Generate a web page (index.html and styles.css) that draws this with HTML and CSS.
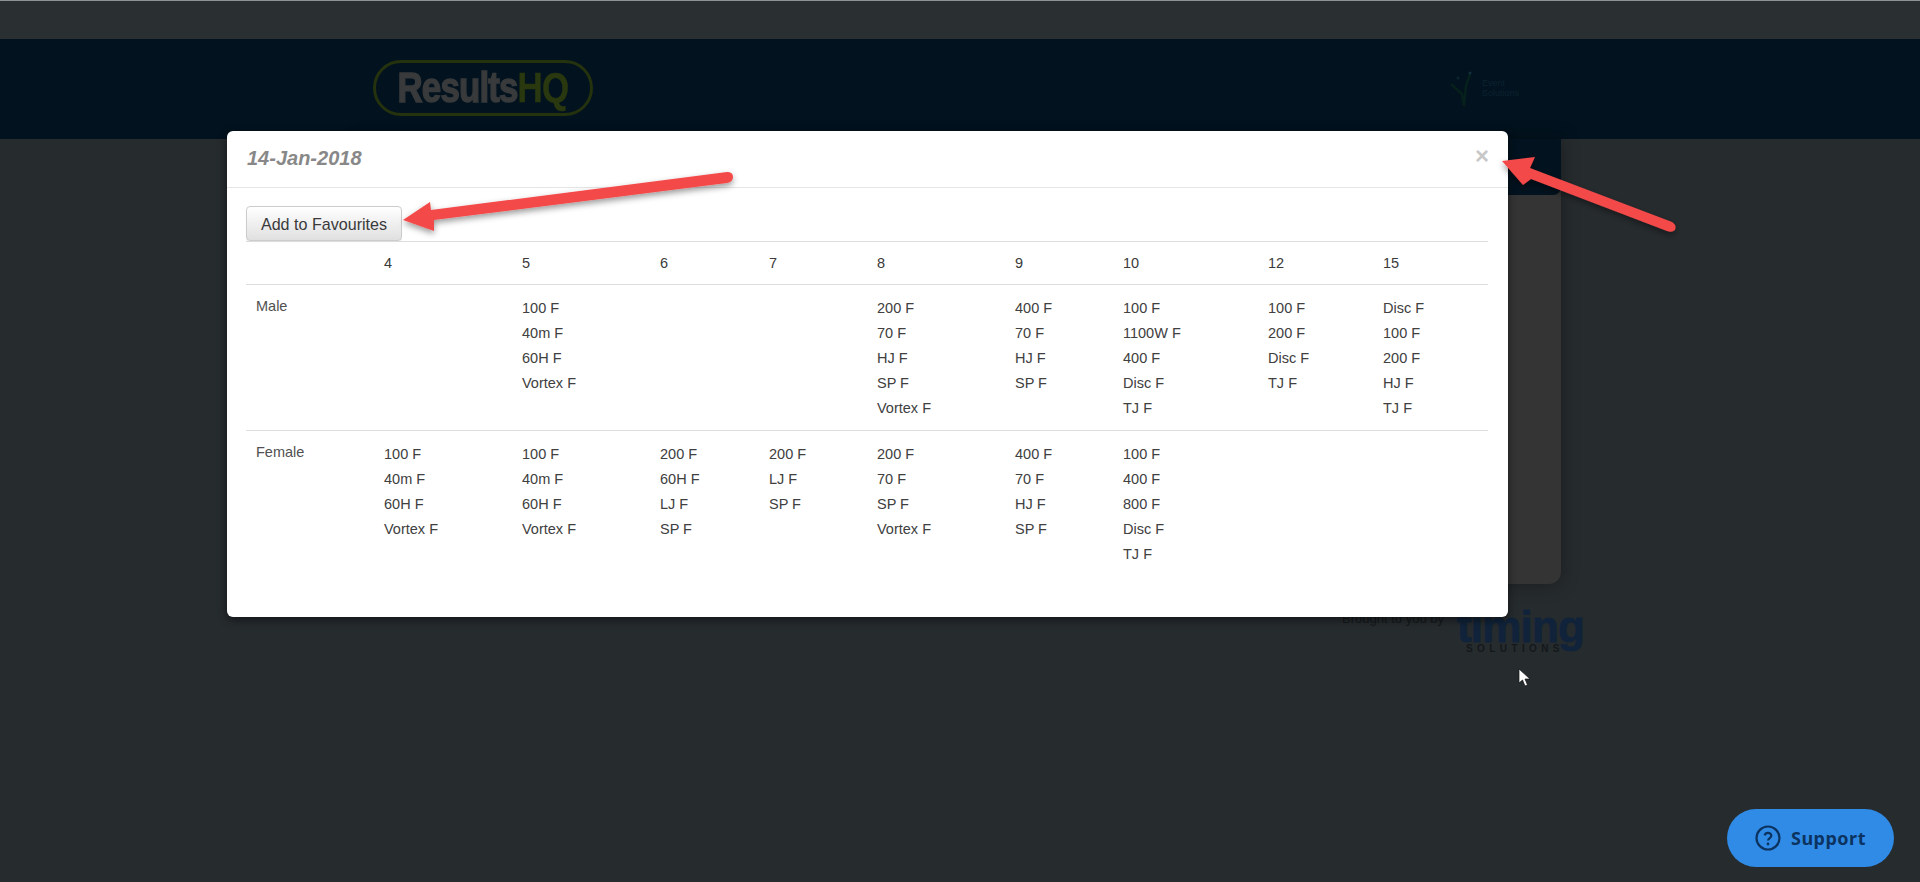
FILE: index.html
```html
<!DOCTYPE html>
<html lang="en">
<head>
<meta charset="utf-8">
<title>ResultsHQ</title>
<link rel="stylesheet" href="styles.css">
</head>
<body>
<div class="page">
  <div class="topbar"></div>
  <header class="navbar">
    <div class="brand"><div class="brand-text"><span class="brand-main">Results</span><span class="brand-hq">HQ</span></div></div>
    <div class="sponsor">
      <svg class="sponsor-mark" width="32" height="40" viewBox="0 0 32 40" aria-hidden="true">
        <path d="M3 16l11 10 2 12M16 38l2-20 4-12" fill="none" stroke="#06201c" stroke-width="2.5"/>
        <circle cx="22" cy="5" r="1.5" fill="#14303e"/>
        <circle cx="10" cy="10" r="1.5" fill="#0a2431"/>
      </svg>
      <div class="sponsor-text">Event<br>Solutions</div>
    </div>
  </header>
  <main class="content">
    <section class="panel">
      <div class="panel-head"></div>
    </section>
    <footer class="credit">
      <span class="credit-label">Brought to you by</span>
      <div class="timing">
        <span class="timing-word">timing</span>
        <span class="timing-sub">SOLUTIONS</span>
      </div>
    </footer>
  </main>
</div>

<div class="modal">
  <div class="modal-header">
    <h4 class="modal-title">14-Jan-2018</h4>
    <span class="close">×</span>
  </div>
  <div class="modal-body">
    <button class="btn" type="button">Add to Favourites</button>
    <table class="events">
      <colgroup>
        <col class="c1"><col class="c2"><col class="c3"><col class="c4"><col class="c5"><col class="c6"><col class="c7"><col class="c8"><col class="c9"><col class="c10">
      </colgroup>
      <thead>
        <tr><th></th><th>4</th><th>5</th><th>6</th><th>7</th><th>8</th><th>9</th><th>10</th><th>12</th><th>15</th></tr>
      </thead>
      <tbody>
        <tr>
          <td class="label">Male</td>
          <td></td>
          <td><div>100 F</div><div>40m F</div><div>60H F</div><div>Vortex F</div></td>
          <td></td>
          <td></td>
          <td><div>200 F</div><div>70 F</div><div>HJ F</div><div>SP F</div><div>Vortex F</div></td>
          <td><div>400 F</div><div>70 F</div><div>HJ F</div><div>SP F</div></td>
          <td><div>100 F</div><div>1100W F</div><div>400 F</div><div>Disc F</div><div>TJ F</div></td>
          <td><div>100 F</div><div>200 F</div><div>Disc F</div><div>TJ F</div></td>
          <td><div>Disc F</div><div>100 F</div><div>200 F</div><div>HJ F</div><div>TJ F</div></td>
        </tr>
        <tr>
          <td class="label">Female</td>
          <td><div>100 F</div><div>40m F</div><div>60H F</div><div>Vortex F</div></td>
          <td><div>100 F</div><div>40m F</div><div>60H F</div><div>Vortex F</div></td>
          <td><div>200 F</div><div>60H F</div><div>LJ F</div><div>SP F</div></td>
          <td><div>200 F</div><div>LJ F</div><div>SP F</div></td>
          <td><div>200 F</div><div>70 F</div><div>SP F</div><div>Vortex F</div></td>
          <td><div>400 F</div><div>70 F</div><div>HJ F</div><div>SP F</div></td>
          <td><div>100 F</div><div>400 F</div><div>800 F</div><div>Disc F</div><div>TJ F</div></td>
          <td></td>
          <td></td>
        </tr>
      </tbody>
    </table>
  </div>
</div>

<svg class="arrows" width="1920" height="882" viewBox="0 0 1920 882" aria-hidden="true">
  <defs>
    <filter id="arrow-shadow" x="-10%" y="-30%" width="120%" height="170%">
      <feDropShadow dx="0" dy="3" stdDeviation="3" flood-color="#000" flood-opacity="0.4"/>
    </filter>
  </defs>
  <g filter="url(#arrow-shadow)" fill="#f44a4a">
    <path d="M403 220L430 202L431 210L727 172Q733 172 733 177Q733 182 727 183L434 220L434 231Z"/>
    <path d="M1502 161L1535 157L1530 168L1672 222Q1677 225 1675 230Q1672 233 1667 231L1531 179L1523 185Z"/>
  </g>
</svg>

<svg class="cursor" width="13" height="19" viewBox="0 0 13 19" aria-hidden="true">
  <path d="M1 1V15L4.5 12L7 18L9.5 17L7 11H12Z" fill="#fff" stroke="#111" stroke-width="0.7"/>
</svg>

<button class="support" type="button">
  <svg width="26" height="26" viewBox="0 0 26 26" aria-hidden="true">
    <circle cx="13" cy="13" r="11.5" fill="none" stroke="#0c335f" stroke-width="2.2"/>
    <path d="M9.6 10.4A3.5 3.5 0 0 1 16.4 10.6C16.4 13 13 13.2 13 15.6" fill="none" stroke="#0c335f" stroke-width="2.2"/>
    <circle cx="13" cy="19" r="1.4" fill="#0c335f"/>
  </svg>
  <span>Support</span>
</button>
</body>
</html>
```

FILE: styles.css
```css
* { box-sizing: border-box; }

html, body {
  margin: 0;
  height: 882px;
  overflow: hidden;
  background: #262b2e;
  font-family: "Liberation Sans", Arial, sans-serif;
}

.page {
  display: flex;
  flex-direction: column;
  height: 882px;
}

.topbar {
  height: 39px;
  flex: none;
  background: #2a2f32;
  border-top: 1px solid #8f9396;
}

.navbar {
  height: 100px;
  flex: none;
  background: #02121e;
  display: flex;
  align-items: flex-start;
  padding: 21px 0 0 373px;
}

.brand {
  width: 220px;
  height: 56px;
  border: 3px solid #24320e;
  border-radius: 28px;
  display: flex;
  align-items: center;
  justify-content: center;
  font-weight: 700;
  font-size: 42px;
  line-height: 50px;
}

.brand-text {
  flex: none;
  white-space: nowrap;
  letter-spacing: -1px;
  transform: scaleX(0.83);
  transform-origin: center;
}

.brand-main { color: #383a3b; -webkit-text-stroke: 1.5px #383a3b; }
.brand-hq { color: #2a380f; -webkit-text-stroke: 0.5px #2a380f; }

.sponsor {
  margin: 8px 0 0 855px;
  display: flex;
  align-items: center;
  gap: 2px;
  height: 40px;
}

.sponsor-text {
  font-size: 9px;
  line-height: 10px;
  color: #0a2230;
  width: 40px;
}

.content {
  flex: 1;
  display: flex;
  flex-direction: column;
  align-items: flex-end;
  padding-right: 359px;
}

.panel {
  width: 1200px;
  height: 445px;
  background: #343434;
  border-radius: 0 0 12px 12px;
  box-shadow: 0 0 18px rgba(0, 0, 0, 0.35);
}

.panel-head {
  height: 56px;
  background: #02121e;
  border-radius: 0 0 8px 8px;
}

.credit {
  display: flex;
  align-items: flex-start;
  margin-top: 26px;
  margin-right: -24px;
  gap: 13px;
}

.credit-label {
  font-size: 13px;
  line-height: 14px;
  margin-top: 2px;
  color: #14181b;
}

.timing {
  display: flex;
  flex-direction: column;
  align-items: flex-start;
  width: 128px;
}

.timing-word {
  font-weight: 700;
  font-size: 44px;
  line-height: 34px;
  letter-spacing: -0.8px;
  color: #10233a;
  -webkit-text-stroke: 0.8px #10233a;
  height: 34px;
}

.timing-sub {
  font-size: 10px;
  font-weight: 700;
  line-height: 10px;
  letter-spacing: 4.4px;
  color: #14181b;
  margin-left: 9px;
}

.modal {
  position: absolute;
  left: 227px;
  top: 131px;
  width: 1281px;
  height: 486px;
  background: #fff;
  border-radius: 6px;
  box-shadow: 0 3px 9px rgba(0, 0, 0, 0.5);
  color: #333;
}

.modal-header {
  height: 57px;
  border-bottom: 1px solid #e5e5e5;
  padding: 0 20px;
  display: flex;
  align-items: flex-start;
  justify-content: space-between;
}

.modal-title {
  margin: 13px 0 0;
  font-size: 20px;
  line-height: 28px;
  font-weight: 700;
  font-style: italic;
  color: #888;
}

.close {
  font-size: 24px;
  line-height: 24px;
  font-weight: 700;
  color: #c8c8c8;
  margin-top: 13px;
  margin-right: -1px;
}

.modal-body {
  padding: 18px 19px 0;
}

.btn {
  display: block;
  width: 156px;
  height: 35px;
  padding: 1px 0 0;
  font-family: inherit;
  font-size: 16.1px;
  color: #3a3a3a;
  border: 1px solid #ccc;
  border-radius: 4px;
  background: linear-gradient(to bottom, #fff, #e0e0e0);
  box-shadow: 0 1px 1px rgba(0, 0, 0, 0.08);
}

.events {
  width: 1242px;
  table-layout: fixed;
  border-collapse: collapse;
  font-size: 14.5px;
  color: #404040;
}

.c1 { width: 128px; }
.c2, .c3, .c6 { width: 138px; }
.c4 { width: 109px; }
.c5, .c7 { width: 108px; }
.c8 { width: 145px; }
.c9, .c10 { width: 115px; }

.events th {
  height: 43px;
  padding: 0 10px;
  text-align: left;
  font-weight: 400;
  color: #3a3a3a;
  border-top: 1px solid #ddd;
  border-bottom: 1px solid #ddd;
}

.events td {
  padding: 11px 10px 8px;
  vertical-align: top;
  line-height: 25px;
}

.events tbody tr:first-child td {
  height: 146px;
  border-bottom: 1px solid #ddd;
}

.events td.label {
  line-height: 21px;
  color: #505050;
}

.arrows {
  position: absolute;
  left: 0;
  top: 0;
  pointer-events: none;
}

.cursor {
  position: absolute;
  left: 1518px;
  top: 668px;
}

.support {
  position: absolute;
  left: 1727px;
  top: 809px;
  width: 167px;
  height: 58px;
  border: 0;
  border-radius: 29px;
  background: #2f8be6;
  display: flex;
  align-items: center;
  justify-content: center;
  gap: 10px;
  padding: 0;
  font-family: "Noto Sans", "Open Sans", sans-serif;
  font-weight: 700;
  font-size: 18px;
  letter-spacing: 0.5px;
  color: #0c335f;
}
```
